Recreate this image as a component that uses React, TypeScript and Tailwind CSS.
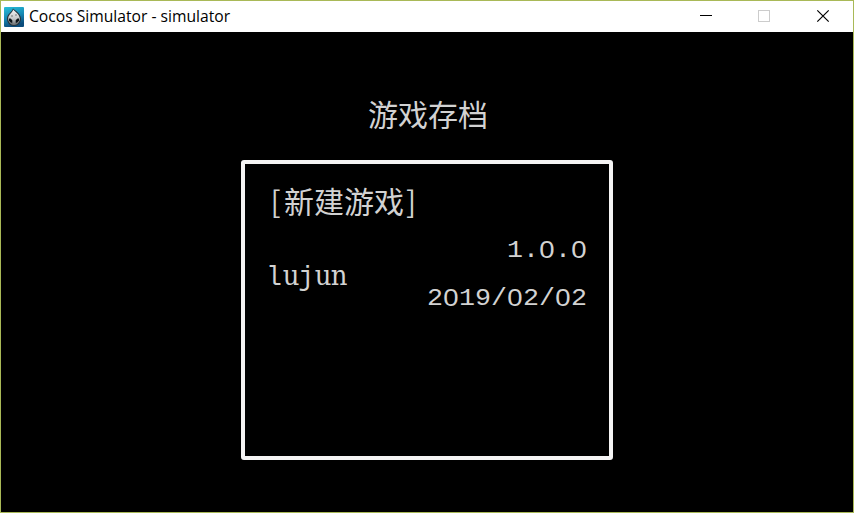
import React from "react";

function AppIcon() {
  return (
    <svg className="ml-[3px] h-5 w-5 shrink-0" viewBox="0 0 20 20">
      <defs>
        <linearGradient id="sea" x1="0" y1="0" x2="0.3" y2="1">
          <stop offset="0" stopColor="#28bfd8" />
          <stop offset="0.55" stopColor="#1689b4" />
          <stop offset="1" stopColor="#0b4c7c" />
        </linearGradient>
        <linearGradient id="head" x1="0" y1="0" x2="0" y2="1">
          <stop offset="0" stopColor="#f4f4f4" />
          <stop offset="0.6" stopColor="#c4c7c8" />
          <stop offset="1" stopColor="#66696c" />
        </linearGradient>
      </defs>
      <rect width="20" height="20" rx="1" fill="url(#sea)" />
      <path d="M9 1.500C11 3.500 16.500 6 17 11.500C17 16 14 19 10 19S3 16 3 11.500C3 7 8 5 9 1.500z" fill="#26343c" />
      <path d="M9.200 2.500C11 5 15.500 7 15.800 11.500C15.800 15.500 13 18 10 18S4.300 15.500 4.200 11.500C4.300 7.500 8.500 6 9.200 2.500z" fill="url(#head)" />
      <path d="M5 11.500h1.500l1.800 1.800v2.500H7l-2-2zM15 11.500h-1.500l-1.800 1.800v2.500H13l2-2z" fill="#0d1418" />
      <path d="M7.500 17h1M11.500 17h1M8 8v2M12 7v2" stroke="#5a6063" strokeWidth=".8" />
    </svg>
  );
}

function TitleBar() {
  return (
    <header className="flex h-[31px] shrink-0 items-center bg-white">
      <AppIcon />
      <h1 className="ml-[5px] whitespace-nowrap font-['Open_Sans','Noto_Sans',sans-serif] text-[15.66px] leading-[31px] text-black">
        Cocos Simulator - simulator
      </h1>
      <div className="ml-auto mr-[5px] flex h-full items-center">
        <svg className="h-full w-[58px]" viewBox="0 0 58 31" shapeRendering="crispEdges">
          <path d="M10 14.5h12" stroke="#000" fill="none" />
        </svg>
        <svg className="h-full w-[58px]" viewBox="0 0 58 31" shapeRendering="crispEdges">
          <rect x="10.5" y="9.5" width="11" height="11" stroke="#ccc" fill="none" />
        </svg>
        <svg className="h-full w-[42px]" viewBox="0 0 42 31">
          <path d="M11.3 9.3l11.4 11.4M22.7 9.3L11.3 20.7" stroke="#000" strokeWidth="1.2" fill="none" />
        </svg>
      </div>
    </header>
  );
}

function Digits({ value }: { value: string }) {
  return (
    <div className="flex h-4 origin-center scale-y-[.93] justify-end whitespace-pre font-['Liberation_Mono',monospace] text-[26.66px] leading-4">
      {value.split(/(0)/).filter(Boolean).map((part, i) =>
        part === "0" ? (
          <span key={i} className="w-4 scale-x-[1.1] text-center font-['Liberation_Sans',sans-serif] text-[25px]">0</span>
        ) : (
          <span key={i}>{part}</span>
        ),
      )}
    </div>
  );
}

const monoLetters = "ijl";

function PlayerName({ value }: { value: string }) {
  return (
    <div className="mt-[3px] flex origin-center scale-y-[1.08] items-baseline font-['DejaVu_Serif',serif] text-[26px] leading-8">
      {value.split("").map((letter, i) => (
        <span
          key={i}
          className={
            monoLetters.includes(letter)
              ? "-ml-px mr-px flex w-4 justify-center font-['Liberation_Mono',monospace]"
              : "flex w-4 justify-center"
          }
        >
          {letter}
        </span>
      ))}
    </div>
  );
}

export default function App() {
  return (
    <div className="flex h-[513px] w-[854px] flex-col overflow-hidden border border-[#a9b957] bg-black">
      <TitleBar />
      <main className="flex flex-1 flex-col items-center bg-black text-[#d2d2d2]">
        <h2 className="ml-[2px] mt-[66px] h-[30px] whitespace-nowrap font-['Noto_Sans_CJK_SC',sans-serif] text-[30px] font-normal leading-[30px]">
          游戏存档
        </h2>
        <section className="mt-[32px] h-[300px] w-[372px] rounded-[3px] border-4 border-[#f5f4f4] px-[22px]">
          <div className="mt-[20px] flex h-[32px] items-center whitespace-nowrap font-['Noto_Sans_CJK_SC',sans-serif] text-[30px] font-normal leading-[32px]">
            <span className="w-[17px] text-center">[</span>
            <span>新建游戏</span>
            <span className="w-[14px] text-center">]</span>
          </div>
          <div className="mt-[26px] flex h-16 items-center justify-between">
            <PlayerName value="lujun" />
            <div className="flex flex-col gap-8">
              <Digits value="1.0.0" />
              <Digits value="2019/02/02" />
            </div>
          </div>
        </section>
      </main>
    </div>
  );
}
